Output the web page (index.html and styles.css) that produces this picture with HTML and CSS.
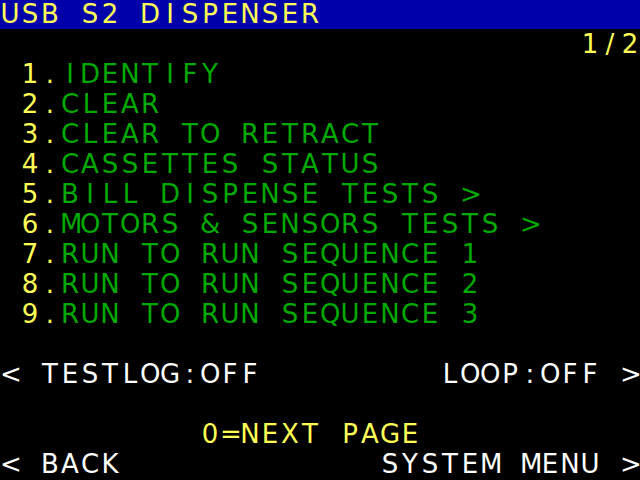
FILE: index.html
```html
<!DOCTYPE html>
<html>
<head>
<meta charset="utf-8">
<title>USB S2 DISPENSER</title>
<link rel="stylesheet" href="styles.css">
</head>
<body>
<div class="screen">
  <div class="row title yl"><span>U</span><span>S</span><span>B</span><span></span><span>S</span><span>2</span><span></span><span>D</span><span>I</span><span>S</span><span>P</span><span>E</span><span>N</span><span>S</span><span>E</span><span>R</span></div>
  <div class="row yl"><span class="c30">1</span><span>/</span><span>2</span></div>
  <div class="row"><span class="c2 yl">1</span><span class="yl">.</span><span class="gr">I</span><span class="gr">D</span><span class="gr">E</span><span class="gr">N</span><span class="gr">T</span><span class="gr">I</span><span class="gr">F</span><span class="gr">Y</span></div>
  <div class="row"><span class="c2 yl">2</span><span class="yl">.</span><span class="gr">C</span><span class="gr">L</span><span class="gr">E</span><span class="gr">A</span><span class="gr">R</span></div>
  <div class="row gr"><span class="c2 yl">3</span><span class="yl">.</span><span>C</span><span>L</span><span>E</span><span>A</span><span>R</span><span></span><span>T</span><span>O</span><span></span><span>R</span><span>E</span><span>T</span><span>R</span><span>A</span><span>C</span><span>T</span></div>
  <div class="row gr"><span class="c2 yl">4</span><span class="yl">.</span><span>C</span><span>A</span><span>S</span><span>S</span><span>E</span><span>T</span><span>T</span><span>E</span><span>S</span><span></span><span>S</span><span>T</span><span>A</span><span>T</span><span>U</span><span>S</span></div>
  <div class="row gr"><span class="c2 yl">5</span><span class="yl">.</span><span>B</span><span>I</span><span>L</span><span>L</span><span></span><span>D</span><span>I</span><span>S</span><span>P</span><span>E</span><span>N</span><span>S</span><span>E</span><span></span><span>T</span><span>E</span><span>S</span><span>T</span><span>S</span><span></span><span>&gt;</span></div>
  <div class="row gr"><span class="c2 yl">6</span><span class="yl">.</span><span>M</span><span>O</span><span>T</span><span>O</span><span>R</span><span>S</span><span></span><span>&amp;</span><span></span><span>S</span><span>E</span><span>N</span><span>S</span><span>O</span><span>R</span><span>S</span><span></span><span>T</span><span>E</span><span>S</span><span>T</span><span>S</span><span></span><span>&gt;</span></div>
  <div class="row gr"><span class="c2 yl">7</span><span class="yl">.</span><span>R</span><span>U</span><span>N</span><span></span><span>T</span><span>O</span><span></span><span>R</span><span>U</span><span>N</span><span></span><span>S</span><span>E</span><span>Q</span><span>U</span><span>E</span><span>N</span><span>C</span><span>E</span><span></span><span>1</span></div>
  <div class="row gr"><span class="c2 yl">8</span><span class="yl">.</span><span>R</span><span>U</span><span>N</span><span></span><span>T</span><span>O</span><span></span><span>R</span><span>U</span><span>N</span><span></span><span>S</span><span>E</span><span>Q</span><span>U</span><span>E</span><span>N</span><span>C</span><span>E</span><span></span><span>2</span></div>
  <div class="row gr"><span class="c2 yl">9</span><span class="yl">.</span><span>R</span><span>U</span><span>N</span><span></span><span>T</span><span>O</span><span></span><span>R</span><span>U</span><span>N</span><span></span><span>S</span><span>E</span><span>Q</span><span>U</span><span>E</span><span>N</span><span>C</span><span>E</span><span></span><span>3</span></div>
  <div class="row"></div>
  <div class="row wh"><span>&lt;</span><span></span><span>T</span><span>E</span><span>S</span><span>T</span><span>L</span><span>O</span><span>G</span><span>:</span><span>O</span><span>F</span><span>F</span><span class="c23">L</span><span>O</span><span>O</span><span>P</span><span>:</span><span>O</span><span>F</span><span>F</span><span></span><span>&gt;</span></div>
  <div class="row"></div>
  <div class="row yl"><span class="c11">0</span><span>=</span><span>N</span><span>E</span><span>X</span><span>T</span><span></span><span>P</span><span>A</span><span>G</span><span>E</span></div>
  <div class="row wh"><span>&lt;</span><span></span><span>B</span><span>A</span><span>C</span><span>K</span><span class="c20">S</span><span>Y</span><span>S</span><span>T</span><span>E</span><span>M</span><span></span><span>M</span><span>E</span><span>N</span><span>U</span><span></span><span>&gt;</span></div>
</div>
</body>
</html>
```

FILE: styles.css
```css
html, body {
  margin: 0;
  padding: 0;
  background: #000;
}

.screen {
  width: 640px;
  height: 480px;
  background: #000;
  font-family: "DejaVu Sans", sans-serif;
  font-size: 26px;
  overflow: hidden;
}

.row {
  display: grid;
  grid-template-columns: repeat(32, 20px);
  height: 30px;
  line-height: 28px;
}

.row span {
  display: block;
  text-align: center;
  white-space: nowrap;
  overflow: visible;
}

.title {
  background: #0000aa;
  height: 29px;
  margin-bottom: 1px;
}

.yl { color: #ffff55; }
.gr { color: #00aa00; }
.wh { color: #ffffff; }

.c2 { grid-column-start: 2; }
.c11 { grid-column-start: 11; }
.c20 { grid-column-start: 20; }
.c23 { grid-column-start: 23; }
.c30 { grid-column-start: 30; }
```
